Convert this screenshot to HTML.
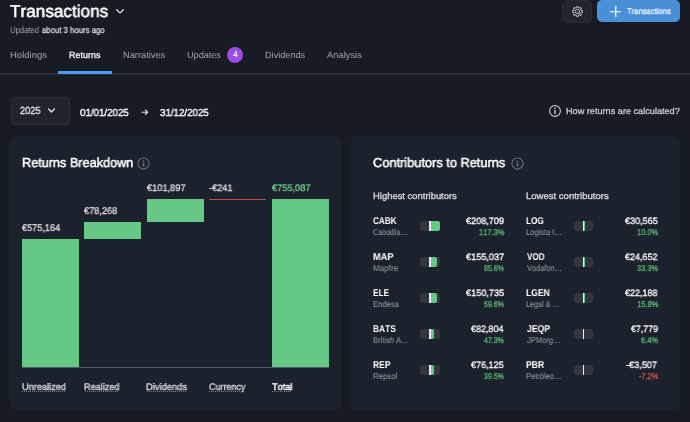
<!DOCTYPE html>
<html><head><meta charset="utf-8">
<style>
*{margin:0;padding:0;box-sizing:border-box}
html,body{width:690px;height:422px;overflow:hidden;background:#171b24;font-family:"Liberation Sans",sans-serif;position:relative}
.t,.a{position:absolute;white-space:nowrap}
.t{transform-origin:0 0;font-kerning:none;will-change:transform;text-rendering:geometricPrecision}
</style></head><body>
<div class="t" style="left:10.21px;top:0.013px;font-size:17.23px;line-height:22px;color:#ffffff;transform:scaleX(0.9956);-webkit-text-stroke:0.5px #ffffff;">Transactions</div>
<svg class="a" style="left:115px;top:7px" width="10" height="8" viewBox="0 0 10 8"><path d="M1.6 2.7 L5 5.9 L8.4 2.7" stroke="#d8d9dc" stroke-width="1.35" fill="none" stroke-linecap="round" stroke-linejoin="round"/></svg>
<div class="t" style="left:10.01px;top:25.014px;font-size:8.83px;line-height:11px;color:#93969c;transform:scaleX(0.8651);-webkit-text-stroke:0.1px #93969c;">Updated</div>
<div class="t" style="left:41.87px;top:25.009px;font-size:8.68px;line-height:11px;color:#d4d6d9;transform:scaleX(0.8968);-webkit-text-stroke:0.3px #d4d6d9;">about 3 hours ago</div>
<div class="t" style="left:10.02px;top:49.002px;font-size:9.06px;line-height:12px;color:#9a9ea6;transform:scaleX(1.0502);-webkit-text-stroke:0.05px #9a9ea6;">Holdings</div>
<div class="t" style="left:69.06px;top:49.005px;font-size:8.92px;line-height:12px;color:#ffffff;transform:scaleX(1.0073);-webkit-text-stroke:0.25px #ffffff;">Returns</div>
<div class="t" style="left:123.44px;top:49.002px;font-size:9.06px;line-height:12px;color:#9a9ea6;transform:scaleX(1.0246);-webkit-text-stroke:0.05px #9a9ea6;">Narratives</div>
<div class="t" style="left:187.20px;top:49.002px;font-size:9.06px;line-height:12px;color:#9a9ea6;transform:scaleX(1.0055);-webkit-text-stroke:0.05px #9a9ea6;">Updates</div>
<div class="t" style="left:265.45px;top:49.002px;font-size:9.06px;line-height:12px;color:#9a9ea6;transform:scaleX(1.0100);-webkit-text-stroke:0.05px #9a9ea6;">Dividends</div>
<div class="t" style="left:327.48px;top:49.002px;font-size:9.06px;line-height:12px;color:#9a9ea6;transform:scaleX(1.0332);-webkit-text-stroke:0.05px #9a9ea6;">Analysis</div>
<div class="a" style="left:227px;top:47px;width:16px;height:16px;background:#9a4ee3;border-radius:50%"></div>
<div class="t" style="left:232.50px;top:50.015px;font-size:7.95px;line-height:10px;color:#ffffff;transform:scaleX(1.0983);-webkit-text-stroke:0.2px #ffffff;">4</div>
<div class="a" style="left:0px;top:73px;width:690px;height:2px;background:#2c3038;"></div>
<div class="a" style="left:58px;top:70.7px;width:54px;height:3.2px;background:#4b9bef;"></div>
<div class="a" style="left:562px;top:-0.3px;width:29.6px;height:23.1px;background:#21252d;border-radius:5px;border:1px solid #292d35;box-sizing:border-box"></div>
<svg class="a" style="left:570.7px;top:4.6px" width="13" height="13" viewBox="0 0 13 13"><path fill="none" stroke="#a3a6ab" stroke-width="1.2" d="M6.50 1.52 L6.63 1.52 L6.76 1.54 L6.89 1.57 L7.01 1.62 L7.13 1.70 L7.24 1.85 L7.32 2.06 L7.39 2.31 L7.45 2.52 L7.53 2.67 L7.60 2.77 L7.69 2.84 L7.78 2.89 L7.87 2.93 L7.96 2.97 L8.05 3.01 L8.15 3.04 L8.25 3.07 L8.36 3.08 L8.48 3.07 L8.64 3.01 L8.83 2.91 L9.06 2.78 L9.27 2.69 L9.45 2.66 L9.59 2.68 L9.71 2.74 L9.82 2.81 L9.93 2.89 L10.02 2.98 L10.11 3.07 L10.19 3.18 L10.26 3.29 L10.32 3.41 L10.34 3.55 L10.31 3.73 L10.22 3.94 L10.09 4.17 L9.99 4.36 L9.93 4.52 L9.92 4.64 L9.93 4.75 L9.96 4.85 L9.99 4.95 L10.03 5.04 L10.07 5.13 L10.11 5.22 L10.16 5.31 L10.23 5.40 L10.33 5.47 L10.48 5.55 L10.69 5.61 L10.94 5.68 L11.15 5.76 L11.30 5.87 L11.38 5.99 L11.43 6.11 L11.46 6.24 L11.48 6.37 L11.48 6.50 L11.48 6.63 L11.46 6.76 L11.43 6.89 L11.38 7.01 L11.30 7.13 L11.15 7.24 L10.94 7.32 L10.69 7.39 L10.48 7.45 L10.33 7.53 L10.23 7.60 L10.16 7.69 L10.11 7.78 L10.07 7.87 L10.03 7.96 L9.99 8.05 L9.96 8.15 L9.93 8.25 L9.92 8.36 L9.93 8.48 L9.99 8.64 L10.09 8.83 L10.22 9.06 L10.31 9.27 L10.34 9.45 L10.32 9.59 L10.26 9.71 L10.19 9.82 L10.11 9.93 L10.02 10.02 L9.93 10.11 L9.82 10.19 L9.71 10.26 L9.59 10.32 L9.45 10.34 L9.27 10.31 L9.06 10.22 L8.83 10.09 L8.64 9.99 L8.48 9.93 L8.36 9.92 L8.25 9.93 L8.15 9.96 L8.05 9.99 L7.96 10.03 L7.87 10.07 L7.78 10.11 L7.69 10.16 L7.60 10.23 L7.53 10.33 L7.45 10.48 L7.39 10.69 L7.32 10.94 L7.24 11.15 L7.13 11.30 L7.01 11.38 L6.89 11.43 L6.76 11.46 L6.63 11.48 L6.50 11.48 L6.37 11.48 L6.24 11.46 L6.11 11.43 L5.99 11.38 L5.87 11.30 L5.76 11.15 L5.68 10.94 L5.61 10.69 L5.55 10.48 L5.47 10.33 L5.40 10.23 L5.31 10.16 L5.22 10.11 L5.13 10.07 L5.04 10.03 L4.95 9.99 L4.85 9.96 L4.75 9.93 L4.64 9.92 L4.52 9.93 L4.36 9.99 L4.17 10.09 L3.94 10.22 L3.73 10.31 L3.55 10.34 L3.41 10.32 L3.29 10.26 L3.18 10.19 L3.07 10.11 L2.98 10.02 L2.89 9.93 L2.81 9.82 L2.74 9.71 L2.68 9.59 L2.66 9.45 L2.69 9.27 L2.78 9.06 L2.91 8.83 L3.01 8.64 L3.07 8.48 L3.08 8.36 L3.07 8.25 L3.04 8.15 L3.01 8.05 L2.97 7.96 L2.93 7.87 L2.89 7.78 L2.84 7.69 L2.77 7.60 L2.67 7.53 L2.52 7.45 L2.31 7.39 L2.06 7.32 L1.85 7.24 L1.70 7.13 L1.62 7.01 L1.57 6.89 L1.54 6.76 L1.52 6.63 L1.52 6.50 L1.52 6.37 L1.54 6.24 L1.57 6.11 L1.62 5.99 L1.70 5.87 L1.85 5.76 L2.06 5.68 L2.31 5.61 L2.52 5.55 L2.67 5.47 L2.77 5.40 L2.84 5.31 L2.89 5.22 L2.93 5.13 L2.97 5.04 L3.01 4.95 L3.04 4.85 L3.07 4.75 L3.08 4.64 L3.07 4.52 L3.01 4.36 L2.91 4.17 L2.78 3.94 L2.69 3.73 L2.66 3.55 L2.68 3.41 L2.74 3.29 L2.81 3.18 L2.89 3.07 L2.98 2.98 L3.07 2.89 L3.18 2.81 L3.29 2.74 L3.41 2.68 L3.55 2.66 L3.73 2.69 L3.94 2.78 L4.17 2.91 L4.36 3.01 L4.52 3.07 L4.64 3.08 L4.75 3.07 L4.85 3.04 L4.95 3.01 L5.04 2.97 L5.13 2.93 L5.22 2.89 L5.31 2.84 L5.40 2.77 L5.47 2.67 L5.55 2.52 L5.61 2.31 L5.68 2.06 L5.76 1.85 L5.87 1.70 L5.99 1.62 L6.11 1.57 L6.24 1.54 L6.37 1.52Z"/><circle cx="6.5" cy="6.5" r="2.0" fill="none" stroke="#a3a6ab" stroke-width="1.2"/></svg>
<div class="a" style="left:597px;top:-0.3px;width:83px;height:22.6px;background:#4a90d9;border-radius:5px"></div>
<svg class="a" style="left:609.5px;top:5.5px" width="11.5" height="11.5" viewBox="0 0 12 12"><path d="M6 0V12M0 6H12" stroke="#fff" stroke-width="1.3"/></svg>
<div class="t" style="left:626.53px;top:6.009px;font-size:8.25px;line-height:11px;color:#ffffff;transform:scaleX(0.9306);-webkit-text-stroke:0.2px #ffffff;">Transactions</div>
<div class="a" style="left:11px;top:97px;width:59px;height:28px;background:#1f232b;border:1px solid #2c3039;border-radius:4px;box-sizing:border-box"></div>
<div class="t" style="left:19.64px;top:105.009px;font-size:10.34px;line-height:13px;color:#e4e5e8;transform:scaleX(0.8890);-webkit-text-stroke:0.35px #e4e5e8;">2025</div>
<svg class="a" style="left:47px;top:107px" width="9" height="7" viewBox="0 0 9 7"><path d="M1.6 2.1 L4.5 5.0 L7.4 2.1" stroke="#dcdde0" stroke-width="1.4" fill="none" stroke-linecap="round" stroke-linejoin="round"/></svg>
<div class="t" style="left:80.12px;top:107.013px;font-size:10.14px;line-height:13px;color:#ffffff;transform:scaleX(0.9614);-webkit-text-stroke:0.35px #ffffff;">01/01/2025</div>
<svg class="a" style="left:141px;top:109px" width="8" height="7" viewBox="0 0 8 7"><path d="M0.6 3.2H6.4M4.0 0.6L6.6 3.2L4.0 5.8" stroke="#e8e9eb" stroke-width="1.15" fill="none"/></svg>
<div class="t" style="left:159.73px;top:107.013px;font-size:10.14px;line-height:13px;color:#ffffff;transform:scaleX(0.9612);-webkit-text-stroke:0.35px #ffffff;">31/12/2025</div>
<svg class="a" style="left:549px;top:105px" width="12" height="12" viewBox="0 0 12 12"><circle cx="6" cy="6" r="5.4" stroke="#c8cacd" stroke-width="1.1" fill="none"/><path d="M6 5V9" stroke="#c8cacd" stroke-width="1.4"/><circle cx="6" cy="3.4" r="0.8" fill="#c8cacd"/></svg>
<div class="t" style="left:566.35px;top:106.008px;font-size:8.72px;line-height:11px;color:#d0d2d5;transform:scaleX(1.0481);-webkit-text-stroke:0.25px #d0d2d5;">How returns are calculated?</div>
<div class="a" style="left:10px;top:136px;width:330.5px;height:274.4px;background:#1c222c;border-radius:6px"></div>
<div class="a" style="left:350.5px;top:136px;width:329.7px;height:274.4px;background:#1c222c;border-radius:6px"></div>
<div class="t" style="left:21.86px;top:154.013px;font-size:13.03px;line-height:17px;color:#ffffff;transform:scaleX(0.9732);-webkit-text-stroke:0.5px #ffffff;">Returns Breakdown</div>
<svg class="a" style="left:137.4px;top:156.6px" width="13" height="13" viewBox="0 0 13 13"><circle cx="6.5" cy="6.5" r="5.6" stroke="#6b6f77" stroke-width="1.05" fill="none"/><rect x="5.6" y="3.7" width="1.8" height="1.7" rx="0.5" fill="#6b6f77"/><rect x="5.6" y="6.2" width="1.8" height="3.2" rx="0.4" fill="#6b6f77"/></svg>
<div class="t" style="left:373.35px;top:154.013px;font-size:13.03px;line-height:17px;color:#ffffff;transform:scaleX(0.9830);-webkit-text-stroke:0.5px #ffffff;">Contributors to Returns</div>
<svg class="a" style="left:511.3px;top:156.6px" width="13" height="13" viewBox="0 0 13 13"><circle cx="6.5" cy="6.5" r="5.6" stroke="#6b6f77" stroke-width="1.05" fill="none"/><rect x="5.6" y="3.7" width="1.8" height="1.7" rx="0.5" fill="#6b6f77"/><rect x="5.6" y="6.2" width="1.8" height="3.2" rx="0.4" fill="#6b6f77"/></svg>
<div class="a" style="left:22px;top:239px;width:57px;height:128px;background:#66c886;"></div>
<div class="a" style="left:84px;top:222px;width:57px;height:17px;background:#66c886;"></div>
<div class="a" style="left:147px;top:199px;width:57px;height:23px;background:#66c886;"></div>
<div class="a" style="left:209px;top:199px;width:57px;height:1px;background:#c24b4b;"></div>
<div class="a" style="left:272px;top:199px;width:57px;height:168px;background:#66c886;"></div>
<div class="a" style="left:22px;top:367px;width:307px;height:1px;background:#555962;"></div>
<div class="t" style="left:22.13px;top:222.005px;font-size:9.74px;line-height:13px;color:#d7d8db;transform:scaleX(0.9388);-webkit-text-stroke:0.35px #d7d8db;">€575,164</div>
<div class="t" style="left:84.43px;top:205.005px;font-size:9.74px;line-height:13px;color:#d7d8db;transform:scaleX(0.9450);-webkit-text-stroke:0.35px #d7d8db;">€78,268</div>
<div class="t" style="left:146.93px;top:183.009px;font-size:9.54px;line-height:12px;color:#d7d8db;transform:scaleX(0.9685);-webkit-text-stroke:0.35px #d7d8db;">€101,897</div>
<div class="t" style="left:208.89px;top:183.009px;font-size:9.54px;line-height:12px;color:#d7d8db;transform:scaleX(0.9655);-webkit-text-stroke:0.35px #d7d8db;">-€241</div>
<div class="t" style="left:271.93px;top:183.009px;font-size:9.54px;line-height:12px;color:#6ccd8b;transform:scaleX(0.9685);-webkit-text-stroke:0.35px #6ccd8b;">€755,087</div>
<div class="t" style="left:21.59px;top:382.008px;font-size:9.56px;line-height:12px;color:#cfd1d4;transform:scaleX(0.9629);-webkit-text-stroke:0.4px #cfd1d4;">Unrealized</div>
<div class="a" style="left:22px;top:391.3px;width:43.2px;height:1px;background-image:linear-gradient(to right,#7d8188 50%,transparent 50%);background-size:2px 1px"></div>
<div class="t" style="left:84.15px;top:382.008px;font-size:9.56px;line-height:12px;color:#cfd1d4;transform:scaleX(0.9553);-webkit-text-stroke:0.4px #cfd1d4;">Realized</div>
<div class="a" style="left:84.6px;top:391.3px;width:34.7px;height:1px;background-image:linear-gradient(to right,#7d8188 50%,transparent 50%);background-size:2px 1px"></div>
<div class="t" style="left:146.03px;top:382.008px;font-size:9.56px;line-height:12px;color:#cfd1d4;transform:scaleX(0.9792);-webkit-text-stroke:0.4px #cfd1d4;">Dividends</div>
<div class="a" style="left:146.5px;top:391.3px;width:40.5px;height:1px;background-image:linear-gradient(to right,#7d8188 50%,transparent 50%);background-size:2px 1px"></div>
<div class="t" style="left:208.94px;top:382.008px;font-size:9.56px;line-height:12px;color:#cfd1d4;transform:scaleX(0.9379);-webkit-text-stroke:0.4px #cfd1d4;">Currency</div>
<div class="a" style="left:209.1px;top:391.3px;width:36.4px;height:1px;background-image:linear-gradient(to right,#7d8188 50%,transparent 50%);background-size:2px 1px"></div>
<div class="t" style="left:271.79px;top:382.008px;font-size:9.56px;line-height:12px;color:#ffffff;transform:scaleX(0.9657);-webkit-text-stroke:0.4px #ffffff;">Total</div>
<div class="a" style="left:271.7px;top:391.3px;width:20.2px;height:1px;background-image:linear-gradient(to right,#7d8188 50%,transparent 50%);background-size:2px 1px"></div>
<div class="t" style="left:373.43px;top:190.002px;font-size:9.04px;line-height:12px;color:#d2d4d7;transform:scaleX(1.0438);-webkit-text-stroke:0.35px #d2d4d7;">Highest contributors</div>
<div class="t" style="left:526.12px;top:190.002px;font-size:9.04px;line-height:12px;color:#d2d4d7;transform:scaleX(1.0554);-webkit-text-stroke:0.35px #d2d4d7;">Lowest contributors</div>
<div class="t" style="left:373.46px;top:215.011px;font-size:9.85px;line-height:13px;color:#ffffff;transform:scaleX(0.8298);font-weight:bold;">CABK</div>
<div class="t" style="left:373.43px;top:227.004px;font-size:8.53px;line-height:11px;color:#8e9197;transform:scaleX(0.8474);-webkit-text-stroke:0.1px #8e9197;">CaixaBa…</div>
<div class="t" style="left:465.93px;top:215.012px;font-size:9.38px;line-height:12px;color:#ffffff;transform:scaleX(0.9688);-webkit-text-stroke:0.3px #ffffff;">€208,709</div>
<div class="t" style="left:478.83px;top:227.014px;font-size:8.42px;line-height:11px;color:#5fbf7e;transform:scaleX(0.8908);-webkit-text-stroke:0.25px #5fbf7e;">117.3%</div>
<div class="a" style="left:420.2px;top:221.3px;width:19.6px;height:10px;background:#31353d;border-radius:3px"></div>
<div class="a" style="left:430.7px;top:221.3px;width:9px;height:10px;background:#66c886;border-radius:0 2px 2px 0"></div>
<div class="a" style="left:429.09999999999997px;top:221.3px;width:1.6px;height:10px;background:#e8e9eb;"></div>
<div class="t" style="left:373.18px;top:251.011px;font-size:9.85px;line-height:13px;color:#ffffff;transform:scaleX(0.9381);font-weight:bold;">MAP</div>
<div class="t" style="left:373.14px;top:263.004px;font-size:8.53px;line-height:11px;color:#8e9197;transform:scaleX(0.9502);-webkit-text-stroke:0.1px #8e9197;">Mapfre</div>
<div class="t" style="left:465.73px;top:251.012px;font-size:9.38px;line-height:12px;color:#ffffff;transform:scaleX(0.9746);-webkit-text-stroke:0.3px #ffffff;">€155,037</div>
<div class="t" style="left:484.19px;top:263.014px;font-size:8.42px;line-height:11px;color:#5fbf7e;transform:scaleX(0.8402);-webkit-text-stroke:0.25px #5fbf7e;">85.6%</div>
<div class="a" style="left:420.2px;top:257.2px;width:19.6px;height:10px;background:#31353d;border-radius:3px"></div>
<div class="a" style="left:430.7px;top:257.2px;width:6.7px;height:10px;background:#66c886;border-radius:0 2px 2px 0"></div>
<div class="a" style="left:429.09999999999997px;top:257.2px;width:1.6px;height:10px;background:#e8e9eb;"></div>
<div class="t" style="left:373.25px;top:287.011px;font-size:9.85px;line-height:13px;color:#ffffff;transform:scaleX(0.8392);font-weight:bold;">ELE</div>
<div class="t" style="left:373.18px;top:299.004px;font-size:8.53px;line-height:11px;color:#8e9197;transform:scaleX(0.8926);-webkit-text-stroke:0.1px #8e9197;">Endesa</div>
<div class="t" style="left:465.73px;top:287.012px;font-size:9.38px;line-height:12px;color:#ffffff;transform:scaleX(0.9727);-webkit-text-stroke:0.3px #ffffff;">€150,735</div>
<div class="t" style="left:484.22px;top:299.014px;font-size:8.42px;line-height:11px;color:#5fbf7e;transform:scaleX(0.8392);-webkit-text-stroke:0.25px #5fbf7e;">59.6%</div>
<div class="a" style="left:420.2px;top:293.2px;width:19.6px;height:10px;background:#31353d;border-radius:3px"></div>
<div class="a" style="left:430.7px;top:293.2px;width:6.5px;height:10px;background:#66c886;border-radius:0 2px 2px 0"></div>
<div class="a" style="left:429.09999999999997px;top:293.2px;width:1.6px;height:10px;background:#e8e9eb;"></div>
<div class="t" style="left:373.24px;top:323.011px;font-size:9.85px;line-height:13px;color:#ffffff;transform:scaleX(0.8537);font-weight:bold;">BATS</div>
<div class="t" style="left:373.18px;top:335.004px;font-size:8.53px;line-height:11px;color:#8e9197;transform:scaleX(0.8847);-webkit-text-stroke:0.1px #8e9197;">British A…</div>
<div class="t" style="left:471.23px;top:323.012px;font-size:9.38px;line-height:12px;color:#ffffff;transform:scaleX(0.9565);-webkit-text-stroke:0.3px #ffffff;">€82,804</div>
<div class="t" style="left:484.34px;top:335.014px;font-size:8.42px;line-height:11px;color:#5fbf7e;transform:scaleX(0.8340);-webkit-text-stroke:0.25px #5fbf7e;">47.3%</div>
<div class="a" style="left:420.2px;top:329.2px;width:19.6px;height:10px;background:#31353d;border-radius:3px"></div>
<div class="a" style="left:430.7px;top:329.2px;width:3.2px;height:10px;background:#66c886;border-radius:0 2px 2px 0"></div>
<div class="a" style="left:429.09999999999997px;top:329.2px;width:1.6px;height:10px;background:#e8e9eb;"></div>
<div class="t" style="left:373.23px;top:359.011px;font-size:9.85px;line-height:13px;color:#ffffff;transform:scaleX(0.8620);font-weight:bold;">REP</div>
<div class="t" style="left:373.16px;top:371.004px;font-size:8.53px;line-height:11px;color:#8e9197;transform:scaleX(0.9137);-webkit-text-stroke:0.1px #8e9197;">Repsol</div>
<div class="t" style="left:471.23px;top:359.012px;font-size:9.38px;line-height:12px;color:#ffffff;transform:scaleX(0.9600);-webkit-text-stroke:0.3px #ffffff;">€76,125</div>
<div class="t" style="left:484.23px;top:371.014px;font-size:8.42px;line-height:11px;color:#5fbf7e;transform:scaleX(0.8386);-webkit-text-stroke:0.25px #5fbf7e;">39.5%</div>
<div class="a" style="left:420.2px;top:365.1px;width:19.6px;height:10px;background:#31353d;border-radius:3px"></div>
<div class="a" style="left:430.7px;top:365.1px;width:3.2px;height:10px;background:#66c886;border-radius:0 2px 2px 0"></div>
<div class="a" style="left:429.09999999999997px;top:365.1px;width:1.6px;height:10px;background:#e8e9eb;"></div>
<div class="t" style="left:526.45px;top:215.011px;font-size:9.85px;line-height:13px;color:#ffffff;transform:scaleX(0.8321);font-weight:bold;">LOG</div>
<div class="t" style="left:526.38px;top:227.004px;font-size:8.53px;line-height:11px;color:#8e9197;transform:scaleX(0.8813);-webkit-text-stroke:0.1px #8e9197;">Logista I…</div>
<div class="t" style="left:624.83px;top:215.012px;font-size:9.38px;line-height:12px;color:#ffffff;transform:scaleX(0.9629);-webkit-text-stroke:0.3px #ffffff;">€30,565</div>
<div class="t" style="left:636.83px;top:227.014px;font-size:8.42px;line-height:11px;color:#5fbf7e;transform:scaleX(0.8852);-webkit-text-stroke:0.25px #5fbf7e;">10.0%</div>
<div class="a" style="left:573.7px;top:221.3px;width:19.6px;height:10px;background:#31353d;border-radius:3px"></div>
<div class="a" style="left:584.2px;top:221.3px;width:1px;height:10px;background:#66c886;border-radius:0 2px 2px 0"></div>
<div class="a" style="left:582.6px;top:221.3px;width:1.6px;height:10px;background:#e8e9eb;"></div>
<div class="t" style="left:526.94px;top:251.011px;font-size:9.85px;line-height:13px;color:#ffffff;transform:scaleX(0.8244);font-weight:bold;">VOD</div>
<div class="t" style="left:526.97px;top:263.004px;font-size:8.53px;line-height:11px;color:#8e9197;transform:scaleX(0.8693);-webkit-text-stroke:0.1px #8e9197;">Vodafon…</div>
<div class="t" style="left:625.13px;top:251.012px;font-size:9.38px;line-height:12px;color:#ffffff;transform:scaleX(0.9562);-webkit-text-stroke:0.3px #ffffff;">€24,652</div>
<div class="t" style="left:636.82px;top:263.014px;font-size:8.42px;line-height:11px;color:#5fbf7e;transform:scaleX(0.8859);-webkit-text-stroke:0.25px #5fbf7e;">33.3%</div>
<div class="a" style="left:573.7px;top:257.2px;width:19.6px;height:10px;background:#31353d;border-radius:3px"></div>
<div class="a" style="left:584.2px;top:257.2px;width:1px;height:10px;background:#66c886;border-radius:0 2px 2px 0"></div>
<div class="a" style="left:582.6px;top:257.2px;width:1.6px;height:10px;background:#e8e9eb;"></div>
<div class="t" style="left:526.43px;top:287.011px;font-size:9.85px;line-height:13px;color:#ffffff;transform:scaleX(0.8679);font-weight:bold;">LGEN</div>
<div class="t" style="left:526.41px;top:299.004px;font-size:8.53px;line-height:11px;color:#8e9197;transform:scaleX(0.8427);-webkit-text-stroke:0.1px #8e9197;">Legal & …</div>
<div class="t" style="left:625.13px;top:287.012px;font-size:9.38px;line-height:12px;color:#ffffff;transform:scaleX(0.9544);-webkit-text-stroke:0.3px #ffffff;">€22,188</div>
<div class="t" style="left:636.52px;top:299.014px;font-size:8.42px;line-height:11px;color:#5fbf7e;transform:scaleX(0.8983);-webkit-text-stroke:0.25px #5fbf7e;">15.8%</div>
<div class="a" style="left:573.7px;top:293.2px;width:19.6px;height:10px;background:#31353d;border-radius:3px"></div>
<div class="a" style="left:584.2px;top:293.2px;width:1px;height:10px;background:#66c886;border-radius:0 2px 2px 0"></div>
<div class="a" style="left:582.6px;top:293.2px;width:1.6px;height:10px;background:#e8e9eb;"></div>
<div class="t" style="left:526.87px;top:323.011px;font-size:9.85px;line-height:13px;color:#ffffff;transform:scaleX(0.8762);font-weight:bold;">JEQP</div>
<div class="t" style="left:526.88px;top:335.004px;font-size:8.53px;line-height:11px;color:#8e9197;transform:scaleX(0.8846);-webkit-text-stroke:0.1px #8e9197;">JPMorg…</div>
<div class="t" style="left:630.53px;top:323.012px;font-size:9.38px;line-height:12px;color:#ffffff;transform:scaleX(0.9406);-webkit-text-stroke:0.3px #ffffff;">€7,779</div>
<div class="t" style="left:640.82px;top:335.014px;font-size:8.42px;line-height:11px;color:#5fbf7e;transform:scaleX(0.8936);-webkit-text-stroke:0.25px #5fbf7e;">6.4%</div>
<div class="a" style="left:573.7px;top:329.2px;width:19.6px;height:10px;background:#31353d;border-radius:3px"></div>
<div class="a" style="left:582.6px;top:329.2px;width:1.6px;height:10px;background:#e8e9eb;"></div>
<div class="t" style="left:526.42px;top:359.011px;font-size:9.85px;line-height:13px;color:#ffffff;transform:scaleX(0.8728);font-weight:bold;">PBR</div>
<div class="t" style="left:526.38px;top:371.004px;font-size:8.53px;line-height:11px;color:#8e9197;transform:scaleX(0.8844);-webkit-text-stroke:0.1px #8e9197;">Petróleo…</div>
<div class="t" style="left:626.49px;top:359.012px;font-size:9.38px;line-height:12px;color:#ffffff;transform:scaleX(0.9766);-webkit-text-stroke:0.3px #ffffff;">-€3,507</div>
<div class="t" style="left:638.67px;top:371.014px;font-size:8.42px;line-height:11px;color:#dc5a50;transform:scaleX(0.8771);-webkit-text-stroke:0.25px #dc5a50;">-7.2%</div>
<div class="a" style="left:573.7px;top:365.1px;width:19.6px;height:10px;background:#31353d;border-radius:3px"></div>
<div class="a" style="left:582.6px;top:365.1px;width:1.6px;height:10px;background:#e8e9eb;"></div>
</body></html>
